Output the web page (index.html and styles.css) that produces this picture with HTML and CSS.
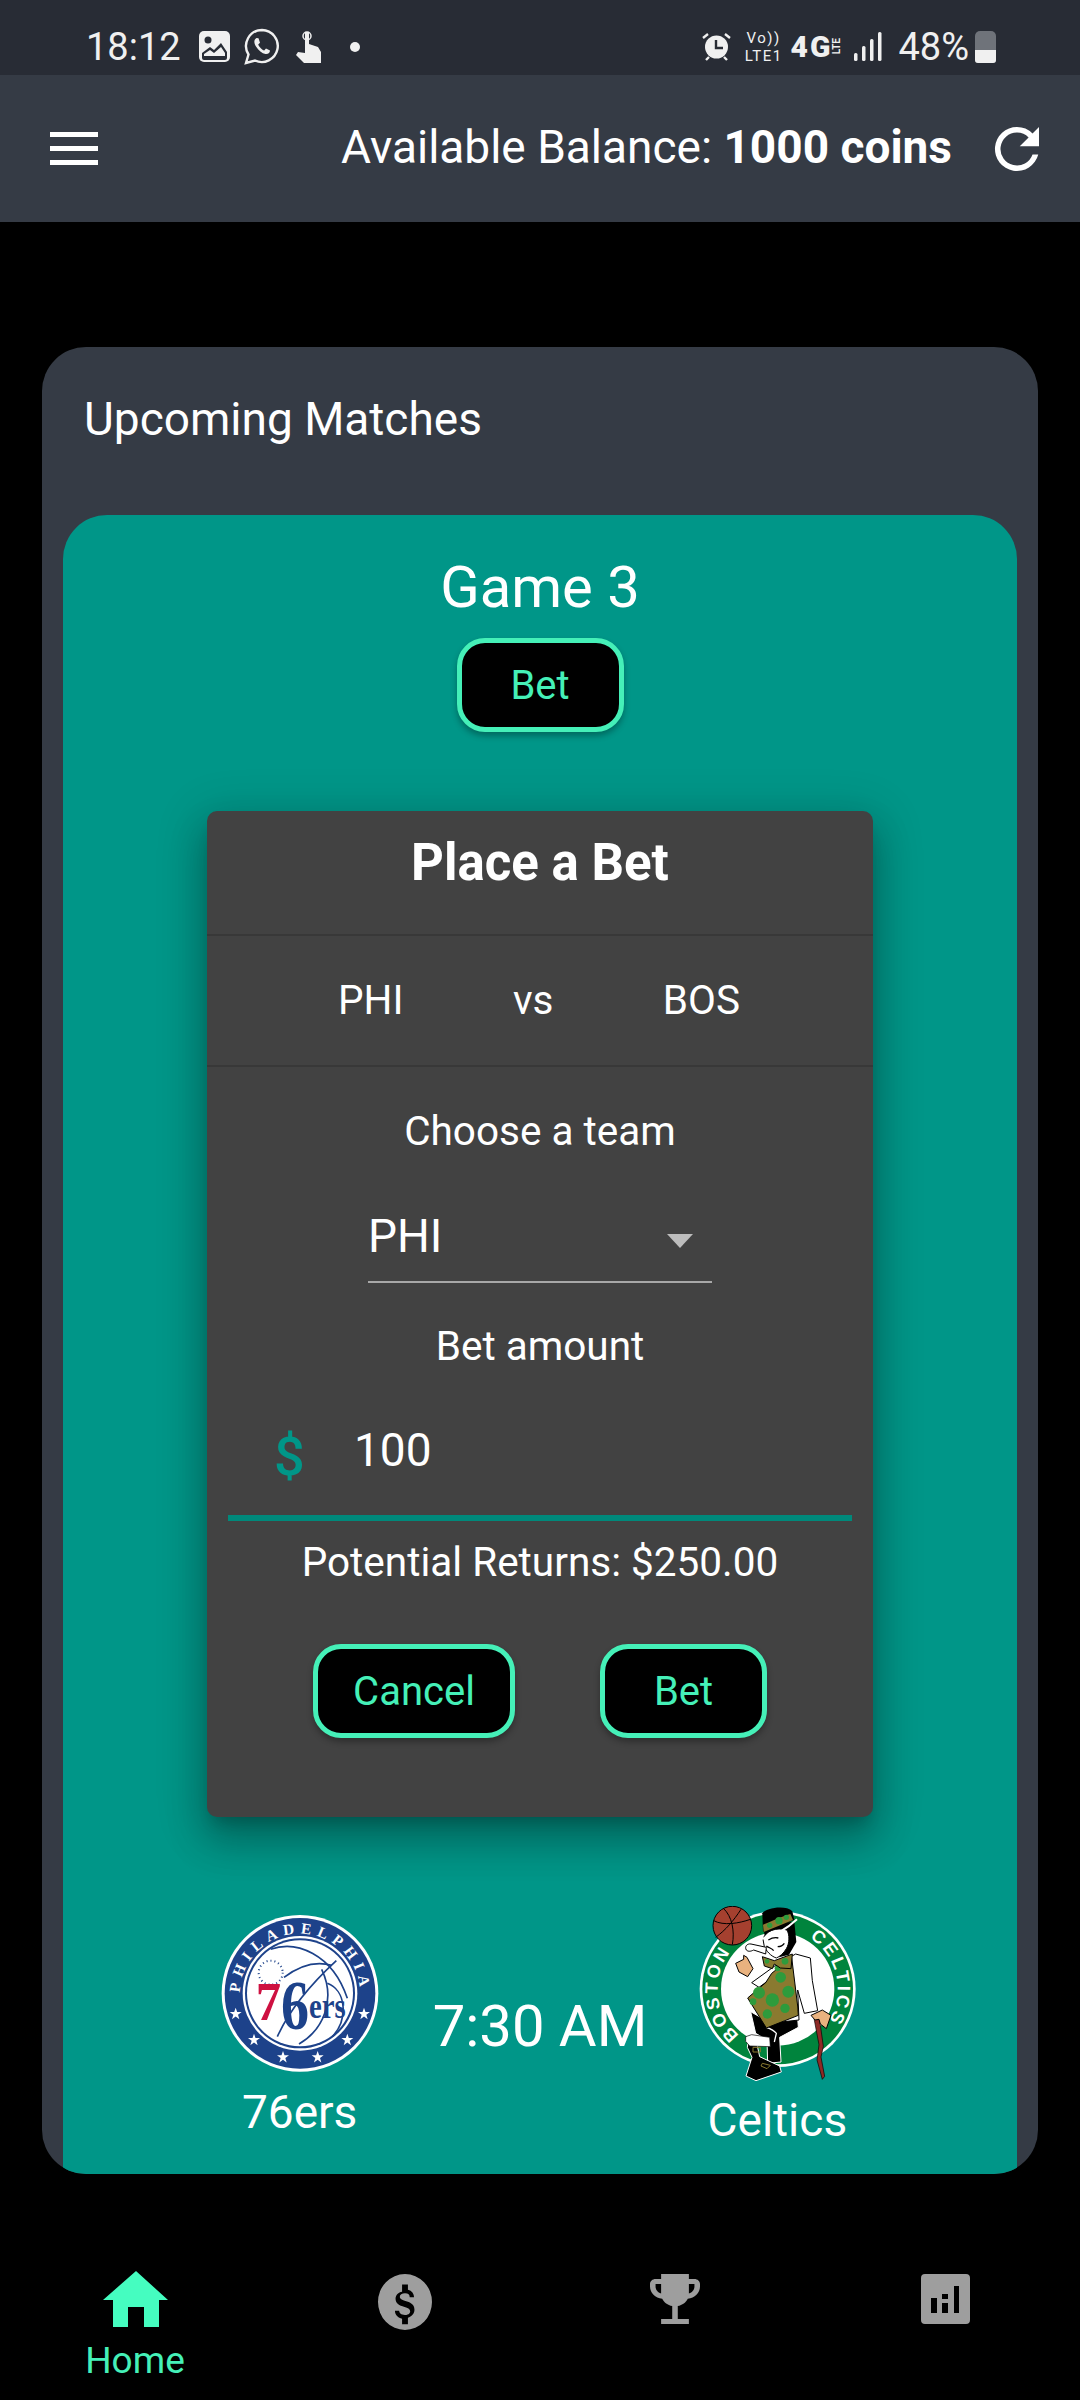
FILE: index.html
```html
<!DOCTYPE html>
<html lang="en">
<head>
  <meta charset="UTF-8" />
  <meta name="viewport" content="width=device-width, initial-scale=1.0"/>
  <title>Upcoming Matches</title>
  <link rel="stylesheet" href="styles.css">
</head>
<body>
  <div class="status-bar">
    <div class="status-left">
      <span class="status-time">18:12</span>
      <svg class="ico-gallery" width="31" height="31" viewBox="0 0 31 31"><rect width="31" height="31" rx="5" fill="#f0f0f0"/><circle cx="9" cy="9" r="3.500" fill="#282c35"/><path d="M3 22l8-6 4 3 7-7 6 9v6a2 2 0 0 1-2 2H5a2 2 0 0 1-2-2z" fill="#282c35"/><path d="M5 23l6-4 4 3 7-6 4 6v3H5z" fill="#f0f0f0"/></svg>
      <svg class="ico-whatsapp" width="36" height="37" viewBox="0 0 36 37"><path d="M18 2a16 16 0 0 0-13.500 24.500L2 35l9-2.500A16 16 0 1 0 18 2z" fill="none" stroke="#f0f0f0" stroke-width="2.400"/><path d="M12.500 10c-2.500 1.500-3 4.500-.5 8.500s6 7 9.500 7.500c3 .3 4.500-1.500 4.500-3.500l-4-2-1.800 2c-2-.5-5-3.500-6-6l1.800-1.800-1.500-4.500z" fill="#f0f0f0"/></svg>
      <svg class="ico-touch" width="27" height="33" viewBox="0 0 27 33"><circle cx="12" cy="6" r="4" fill="none" stroke="#f0f0f0" stroke-width="1.500"/><path d="M10 2h4v12l9 3 3 5v11H9L1 25l2-3 7 1z" fill="#f0f0f0"/></svg>
      <span class="status-dot"></span>
    </div>
    <div class="status-right">
      <svg class="ico-alarm" width="29" height="29" viewBox="0 0 29 29"><circle cx="14.500" cy="15" r="11.500" fill="#f0f0f0"/><path d="M14 8v8h7" fill="none" stroke="#282c35" stroke-width="2.400"/><path d="M1 6l5-4M28 6l-5-4M4 28l3-3M25 28l-3-3" stroke="#f0f0f0" stroke-width="2.400"/></svg>
      <span class="volte"><span class="volte-line">Vo))</span><span class="volte-line">LTE1</span></span>
      <span class="net">4G</span><span class="net-lte">LTE</span>
      <svg class="ico-signal" width="28" height="29" viewBox="0 0 28 29"><g fill="#f0f0f0"><rect x="0" y="21" width="3.500" height="8" rx="1.500"/><rect x="8" y="14" width="3.500" height="15" rx="1.500"/><rect x="16" y="7" width="3.500" height="22" rx="1.500"/><rect x="24" y="0" width="3.500" height="29" rx="1.500"/></g></svg>
      <span class="status-batt">48%</span>
      <div class="battery"><div class="battery-fill"></div></div>
    </div>
  </div>

  <header class="app-bar">
    <div class="menu-btn"><span></span><span></span><span></span></div>
    <div class="balance">Available Balance: <b>1000 coins</b></div>
    <svg class="refresh" width="66" height="66" viewBox="0 0 24 24"><path fill="#fff" d="M17.650 6.350A7.960 7.960 0 0 0 12 4a8 8 0 1 0 7.730 10h-2.080A6 6 0 1 1 12 6c1.660 0 3.140.69 4.220 1.780L13 11h7V4z"/></svg>
  </header>

  <main class="content">
    <section class="matches">
      <h2 class="matches-title">Upcoming Matches</h2>
      <div class="game-card">
        <div class="game-name">Game 3</div>
        <button class="neon-btn">Bet</button>

        <div class="dialog">
          <div class="dialog-title">Place a Bet</div>
          <div class="dialog-teams"><span>PHI</span><span>vs</span><span>BOS</span></div>
          <div class="dialog-body">
            <div class="field-label">Choose a team</div>
            <div class="team-select"><span>PHI</span><i class="caret"></i></div>
            <div class="field-label amount-label">Bet amount</div>
            <div class="amount-input">
              <span class="dollar">$</span>
              <span class="amount-val">100</span>
            </div>
            <div class="returns">Potential Returns: $250.00</div>
            <div class="dialog-actions">
              <button class="neon-btn btn-wide">Cancel</button>
              <button class="neon-btn">Bet</button>
            </div>
          </div>
        </div>

        <div class="teams-row">
          <div class="team team-home">
            <svg width="158" height="158" viewBox="66 72 474 474">
              <defs>
                <path id="phiArc" d="M124 330A180 180 0 1 1 482 330"/>
                <polygon id="phiStar" points="0,-19 4.500,-6 18,-6 7,2.300 11,15.400 0,7.500 -11,15.400 -7,2.300 -18,-6 -4.500,-6"/>
              </defs>
              <circle cx="303" cy="310" r="235" fill="#fff"/>
              <circle cx="303" cy="310" r="226" fill="#1d428a"/>
              <circle cx="303" cy="310" r="172" fill="#fff"/>
              <circle cx="303" cy="310" r="165" fill="#1d428a"/>
              <circle cx="303" cy="310" r="159" fill="#fff"/>
              <text class="phi-ring"><textPath href="#phiArc" startOffset="50%" text-anchor="middle">PHILADELPHIA</textPath></text>
              <g fill="none" stroke="#1d428a" stroke-width="5">
                <path d="M215 178C290 150 400 190 445 325"/>
                <path d="M412 212C360 260 280 340 235 440"/>
                <path d="M255 262C300 228 350 212 398 226"/>
                <path d="M385 280C440 300 450 385 400 440"/>
                <path d="M368 238C412 330 372 420 300 462"/>
              </g>
              <circle cx="215" cy="248" r="36" fill="#fff" stroke="#1d428a" stroke-width="6" stroke-dasharray="3 9"/>
              <text class="phi-num phi-seven" x="170" y="391" textLength="76" lengthAdjust="spacingAndGlyphs">7</text>
              <text class="phi-num phi-six" x="246" y="416" textLength="84" lengthAdjust="spacingAndGlyphs">6</text>
              <text class="phi-num phi-ers" x="330" y="385" textLength="110" lengthAdjust="spacingAndGlyphs">ers</text>
              <g fill="#fff">
                <use href="#phiStar" x="110" y="372"/>
                <use href="#phiStar" x="495" y="372"/>
                <use href="#phiStar" x="165" y="450"/>
                <use href="#phiStar" x="445" y="450"/>
                <use href="#phiStar" x="252" y="502"/>
                <use href="#phiStar" x="356" y="502"/>
              </g>
            </svg>
            <div class="team-name">76ers</div>
          </div>

          <div class="game-time">7:30 AM</div>

          <div class="team team-away">
            <svg width="160" height="176" viewBox="54 48 480 528">
              <defs>
                <path id="bosArc" d="M185 439A180 180 0 0 1 162 177"/>
                <path id="celArc" d="M386 141A180 180 0 0 1 442 403"/>
              </defs>
              <circle cx="296" cy="297" r="234" fill="#fff"/>
              <circle cx="296" cy="297" r="226" fill="#00843d"/>
              <circle cx="296" cy="297" r="170" fill="#fff"/>
              <text class="bos-ring"><textPath href="#bosArc" startOffset="50%" text-anchor="middle">BOSTON</textPath></text>
              <text class="bos-ring"><textPath href="#celArc" startOffset="50%" text-anchor="middle">CELTICS</textPath></text>

              <!-- cane and right hand -->
              <path d="M405 385l16-2 12 86-7 32 11 58-7 9-16-58 6-46z" fill="#8e2a26" stroke="#000" stroke-width="2"/>
              <!-- legs -->
              <path d="M215 365l47 27 93-22 3 42-56 30 4 74-40 4-2-70-34-20z" fill="#000" stroke="#fff" stroke-width="3"/>
              <path d="M262 412c12 4 24 10 30 18l-6 26" fill="none" stroke="#fff" stroke-width="4"/>
              <path d="M208 450l22-6 12 56 60 28 5 18-76 26-30-14 18-56-14-30z" fill="#000" stroke="#fff" stroke-width="3"/>
              <path d="M200 440l18-6 54 8 2 28-62-2-12-14z" fill="#fff" stroke="#000" stroke-width="2"/>
              <path d="M222 472h22v14h-22zM250 520l24 6-10 10-18-8z" fill="none" stroke="#8a7a30" stroke-width="3"/>
              <!-- shirt and arms -->
              <path d="M350 192l44 12 6 68 16 90-40 8-20-70 4 90-90 10-60-70 60-60-30 22-22-14 72-52z" fill="#fff" stroke="#000" stroke-width="3"/>
              <path d="M278 250l60-48 18 146 2 28-96 38-56-90 54-46z" fill="#8a7a30" stroke="#000" stroke-width="3"/>
              <g fill="#2e9b3c">
                <circle cx="240" cy="308" r="18"/><circle cx="222" cy="335" r="10"/><circle cx="305" cy="262" r="16"/><circle cx="328" cy="305" r="18"/>
                <circle cx="280" cy="330" r="20"/><circle cx="318" cy="355" r="14"/><circle cx="265" cy="372" r="14"/><circle cx="296" cy="235" r="9"/>
              </g>
              <!-- bow tie -->
              <path d="M250 200l36 12 54-20-4 44-32-2-18-12-6 14-24-8z" fill="#8a7a30" stroke="#000" stroke-width="3"/>
              <circle cx="318" cy="214" r="10" fill="#2e9b3c"/><circle cx="264" cy="214" r="7" fill="#2e9b3c"/>
              <!-- hair and hat -->
              <path d="M252 100l94-4 6 60-22 38-30 8-40-40z" fill="#000"/>
              <path d="M252 148c6-24 40-38 72-28 8 14 8 40-2 56-8 14-20 24-30 28-18-6-30-22-36-34z" fill="#fff" stroke="#000" stroke-width="3"/>
              <path d="M268 150c10-6 22-8 30-6M296 170c8 0 16-4 20-10M262 168c8 6 16 6 22 14" fill="none" stroke="#000" stroke-width="4"/>
              <path d="M250 70c10-16 70-26 90-6l6 26-94 36z" fill="#000"/>
              <path d="M252 104c22-8 54-24 82-32l8 18-88 36z" fill="#8a7a30"/>
              <circle cx="300" cy="92" r="11" fill="#2e9b3c"/><circle cx="322" cy="82" r="8" fill="#2e9b3c"/><circle cx="272" cy="106" r="8" fill="#2e9b3c"/>
              <path d="M242 148c40-8 80-30 112-60" fill="none" stroke="#fff" stroke-width="6"/>
              <!-- pipe, left hand, ball -->
              <path d="M262 172l-46-10c-12-2-20 8-14 18 6 6 14 4 22 0l36 12z" fill="#fff" stroke="#000" stroke-width="3"/>
              <path d="M194 196l10 6 18 34-16 24-26-14-10-26 24-12z" fill="#e9b27f" stroke="#000" stroke-width="3"/>
              <circle cx="160" cy="107" r="58" fill="#a5402f" stroke="#000" stroke-width="3"/>
              <path d="M104 92c30 16 76 8 110-4M134 56c24 22 34 66 26 108M186 58c-22 34-46 62-76 84" fill="none" stroke="#000" stroke-width="3"/>
              <!-- right hand -->
              <path d="M396 376l34-16 26 16-14 40-18-14-4-14-12 2z" fill="#e9b27f" stroke="#000" stroke-width="3"/>
            </svg>
            <div class="team-name">Celtics</div>
          </div>
        </div>
      </div>
    </section>
  </main>

  <nav class="tab-bar">
    <div class="tab tab-active">
      <svg width="65" height="56" viewBox="0 0 65 56"><path d="M33 0l32 29h-9v27H41V36H25v20H10V29H0z" fill="#45fdc0"/></svg>
      <span>Home</span>
    </div>
    <div class="tab">
      <svg width="54" height="56" viewBox="0 0 24 24" preserveAspectRatio="none"><path fill="#9e9e9e" d="M12 0a12 12 0 1 0 0 24 12 12 0 0 0 0-24zm1.300 19.200v2.300h-2.600v-2.300c-1.700-.4-3.100-1.500-3.200-3.400h1.900c.1 1 .8 1.800 2.600 1.800 1.900 0 2.300-1 2.300-1.500 0-.8-.4-1.500-2.500-2-2.400-.6-4-1.600-4-3.500 0-1.600 1.300-2.700 2.900-3V4.500h2.600v2.300c1.800.4 2.700 1.800 2.700 3.200h-1.900c0-1-.6-1.700-2.100-1.700-1.400 0-2.300.6-2.300 1.500 0 .8.600 1.300 2.500 1.800s4 1.300 4 3.700c0 1.800-1.300 2.900-2.900 3.400z"/></svg>
    </div>
    <div class="tab">
      <svg width="50" height="50" viewBox="3 2 18 20" preserveAspectRatio="none"><path fill="#9e9e9e" d="M19 4h-2V2H7v2H5C3.900 4 3 4.900 3 6v1c0 2.500 1.900 4.600 4.400 4.900.6 1.500 2 2.600 3.600 2.900V20H7v2h10v-2h-4v-5.200c1.600-.3 3-1.400 3.600-2.900C19.100 11.600 21 9.500 21 7V6c0-1.100-.9-2-2-2zM5 7V6h2v3.800C5.800 9.400 5 8.300 5 7zm14 0c0 1.300-.8 2.400-2 2.800V6h2v1z"/></svg>
    </div>
    <div class="tab">
      <svg width="49" height="50" viewBox="0 0 49 50"><path fill="#9e9e9e" fill-rule="evenodd" d="M4 0h41a4 4 0 0 1 4 4v42a4 4 0 0 1-4 4H4a4 4 0 0 1-4-4V4a4 4 0 0 1 4-4zm6 24v15h6V24zm11-4v5h6v-5zm0 9v10h6V29zm12-17v27h5V12z"/></svg>
    </div>
  </nav>
</body>
</html>
```

FILE: styles.css
```css
* { box-sizing: border-box; }
html, body {
  margin: 0;
  height: 2400px;
}
body {
  background: #000;
  color: #fff;
  font-family: Roboto, sans-serif;
  width: 1080px;
  overflow: hidden;
  display: flex;
  flex-direction: column;
}
button { font-family: inherit; }
svg { display: block; flex: none; }

.status-bar {
  height: 75px;
  background: #282c35;
  color: #f0f0f0;
  display: flex;
  justify-content: space-between;
  align-items: center;
  padding: 18px 84px 0 86px;
  font-size: 38px;
}
.status-left, .status-right {
  display: flex;
  align-items: center;
}
.ico-gallery { margin-left: 18px; }
.ico-whatsapp { margin-left: 14px; }
.ico-touch { margin-left: 15px; }
.status-dot {
  width: 10px;
  height: 10px;
  border-radius: 50%;
  background: #f0f0f0;
  margin-left: 28px;
}
.volte {
  display: flex;
  flex-direction: column;
  align-items: center;
  margin-left: 14px;
}
.volte-line {
  font-size: 15px;
  line-height: 18px;
  letter-spacing: 1.500px;
}
.net {
  font-size: 30px;
  font-weight: 900;
  letter-spacing: 2px;
  margin-left: 8px;
}
.net-lte {
  font-size: 10px;
  line-height: 10px;
  writing-mode: vertical-rl;
  transform: rotate(180deg);
  font-weight: 700;
}
.ico-signal { margin-left: 12px; }
.status-batt { margin-left: 16px; }
.battery {
  width: 21px;
  height: 32px;
  margin-left: 6px;
  border-radius: 5px 5px 3px 3px;
  background: #6f737a;
  display: flex;
  align-items: flex-end;
  overflow: hidden;
}
.battery-fill {
  width: 100%;
  height: 38%;
  background: #f0f0f0;
}

.app-bar {
  height: 147px;
  background: #353b45;
  display: flex;
  align-items: center;
  padding: 0 30px 0 50px;
}
.menu-btn {
  width: 48px;
  display: flex;
  flex-direction: column;
  gap: 9px;
}
.menu-btn span {
  height: 5px;
  background: #fff;
}
.balance {
  margin-left: auto;
  margin-right: 32px;
  margin-bottom: 4px;
  font-size: 46px;
}
.balance b { font-weight: 700; }

.content {
  padding: 125px 42px 0;
}
.matches {
  background: #353b45;
  border-radius: 44px;
  height: 1827px;
  padding: 0 21px;
  overflow: hidden;
}
.matches-title {
  margin: 0;
  font-weight: 400;
  font-size: 46px;
  line-height: 52px;
  padding: 46px 21px 0;
  height: 168px;
}
.game-card {
  background: #009688;
  border-radius: 44px 44px 0 0;
  height: 1659px;
  display: flex;
  flex-direction: column;
  align-items: center;
}
.game-name {
  font-size: 58px;
  line-height: 64px;
  margin-top: 40px;
}
.neon-btn {
  width: 167px;
  height: 94px;
  padding: 0;
  background: #000;
  color: #45f0b8;
  border: 5px solid #45f0b8;
  border-radius: 28px;
  font-size: 40px;
  box-shadow: 0 4px 6px rgba(0, 0, 0, 0.3);
}
.btn-wide { width: 202px; }
.game-card > .neon-btn {
  margin-top: 19px;
}

.dialog {
  width: 666px;
  height: 1006px;
  margin-top: 79px;
  background: #424242;
  border-radius: 10px;
  box-shadow: 0 11px 15px -7px rgba(0, 0, 0, 0.2), 0 24px 38px 3px rgba(0, 0, 0, 0.2), 0 9px 46px 8px rgba(0, 0, 0, 0.16);
  display: flex;
  flex-direction: column;
}
.dialog-title {
  height: 125px;
  text-align: center;
  font-size: 51px;
  font-weight: 700;
  line-height: 103px;
  border-bottom: 2px solid #383838;
}
.dialog-teams {
  height: 131px;
  display: flex;
  justify-content: space-between;
  align-items: center;
  padding: 0 133px 2px 131px;
  font-size: 40.500px;
  border-bottom: 2px solid #383838;
}
.dialog-body {
  display: flex;
  flex-direction: column;
  align-items: center;
  padding: 0 21px;
}
.field-label {
  font-size: 40.500px;
  line-height: 46px;
  margin-top: 41px;
}
.team-select {
  width: 344px;
  height: 93px;
  margin-top: 36px;
  border-bottom: 2px solid #a8a8a8;
  display: flex;
  justify-content: space-between;
  align-items: center;
  font-size: 46px;
  padding-right: 19px;
}
.caret {
  width: 0;
  height: 0;
  margin-top: 10px;
  border-left: 13px solid transparent;
  border-right: 13px solid transparent;
  border-top: 14px solid #bdbdbd;
}
.amount-label { margin-top: 40px; }
.amount-input {
  width: 100%;
  height: 152px;
  border-bottom: 6px solid #00897b;
  display: flex;
  align-items: center;
  padding: 16px 0 0 46px;
}
.dollar {
  color: #009688;
  font-size: 54px;
  font-weight: 500;
  width: 80px;
  margin-top: 12px;
}
.amount-val { font-size: 46px; }
.returns {
  font-size: 40.500px;
  line-height: 48px;
  margin-top: 17px;
}
.dialog-actions {
  display: flex;
  gap: 85px;
  margin-top: 58px;
}

.teams-row {
  display: flex;
  justify-content: center;
  align-items: flex-start;
  gap: 53px;
  margin-top: 89px;
}
.team {
  width: 160px;
  display: flex;
  flex-direction: column;
  align-items: center;
}
.team-home { margin-top: 8px; }
.team-away { margin-left: -3px; margin-right: 3px; }
.team-name {
  font-size: 46px;
  line-height: 54px;
  margin-top: 13px;
  white-space: nowrap;
}
.team-away .team-name { margin-top: 11px; }
.game-time {
  font-size: 58px;
  line-height: 68px;
  margin-top: 86px;
  white-space: nowrap;
}

.phi-ring {
  font-family: "Liberation Serif", serif;
  font-weight: 700;
  font-size: 46px;
  letter-spacing: 17px;
  fill: #fff;
}
.phi-num {
  font-family: "Liberation Serif", serif;
  font-weight: 700;
  fill: #1d428a;
}
.phi-seven { font-size: 165px; fill: #ce1141; }
.phi-six { font-size: 210px; }
.phi-ers { font-size: 105px; }
.bos-ring {
  font-family: "Liberation Sans", sans-serif;
  font-weight: 700;
  font-size: 54px;
  letter-spacing: 9px;
  fill: #fff;
}

.tab-bar {
  display: grid;
  grid-template-columns: repeat(4, 1fr);
  margin-top: auto;
  height: 129px;
}
.tab {
  display: flex;
  flex-direction: column;
  align-items: center;
}
.tab svg { margin-top: 3px; }
.tab-active svg { margin-top: 0; }
.tab span {
  color: #45f0b8;
  font-size: 37px;
  line-height: 42px;
  margin-top: 13px;
}
```
